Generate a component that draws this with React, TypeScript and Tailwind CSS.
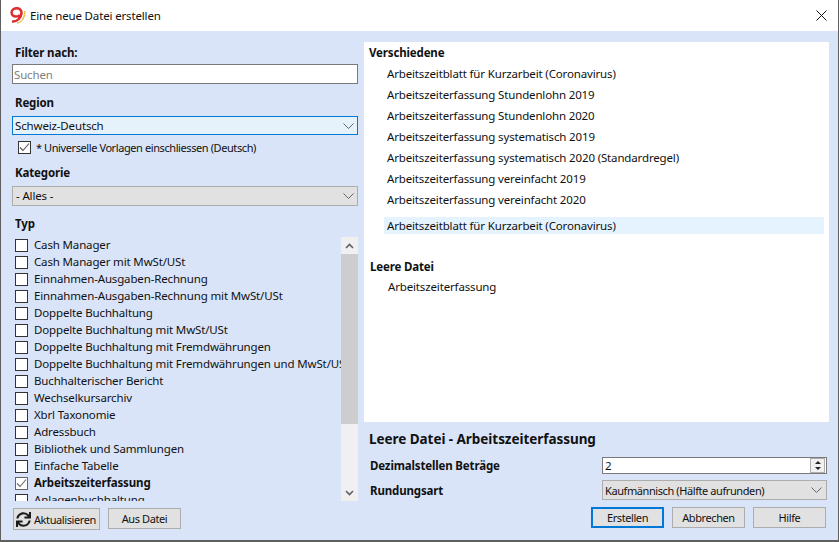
import React from "react";
import { FaSync } from "react-icons/fa";

const types = [
  "Cash Manager",
  "Cash Manager mit MwSt/USt",
  "Einnahmen-Ausgaben-Rechnung",
  "Einnahmen-Ausgaben-Rechnung mit MwSt/USt",
  "Doppelte Buchhaltung",
  "Doppelte Buchhaltung mit MwSt/USt",
  "Doppelte Buchhaltung mit Fremdwährungen",
  "Doppelte Buchhaltung mit Fremdwährungen und MwSt/USt",
  "Buchhalterischer Bericht",
  "Wechselkursarchiv",
  "Xbrl Taxonomie",
  "Adressbuch",
  "Bibliothek und Sammlungen",
  "Einfache Tabelle",
];

const templates = [
  "Arbeitszeitblatt für Kurzarbeit (Coronavirus)",
  "Arbeitszeiterfassung Stundenlohn 2019",
  "Arbeitszeiterfassung Stundenlohn 2020",
  "Arbeitszeiterfassung systematisch 2019",
  "Arbeitszeiterfassung systematisch 2020 (Standardregel)",
  "Arbeitszeiterfassung vereinfacht 2019",
  "Arbeitszeiterfassung vereinfacht 2020",
];

const Chevron = () => (
  <svg width="11" height="6" viewBox="0 0 11 6" fill="none" stroke="#666" strokeWidth="1">
    <path d="M0.5 0.5 L5.5 5.5 L10.5 0.5" />
  </svg>
);

const Check = ({ color }: { color: string }) => (
  <svg width="11" height="11" viewBox="0 0 11 11" fill="none" stroke={color} strokeWidth="1.1">
    <path d="M1 5.5 L4 8.5 L10 1.5" />
  </svg>
);

const Box = ({ checked, muted }: { checked?: boolean; muted?: boolean }) => (
  <span
    className={`flex h-[13px] w-[13px] shrink-0 items-center justify-center border bg-white ${
      muted ? "border-[#666]" : "border-[#333]"
    }`}
  >
    {checked && <Check color={muted ? "#666" : "#555"} />}
  </span>
);

const Btn = ({ label, width, primary }: { label: string; width: string; primary?: boolean }) => (
  <button
    className={`flex h-[21px] items-center justify-center bg-[#e1e1e1] text-[11px] tracking-[-0.41px] ${width} ${
      primary ? "border-2 border-[#0078d7]" : "border border-[#adadad]"
    }`}
  >
    {label}
  </button>
);

const Logo = () => (
  <svg width="17" height="17" viewBox="0 0 17 17" fill="none">
    <path d="M8 16 C12 15.5 15.5 11 15.5 5 L16 4 C16.5 10 13 16 8 16 Z" fill="#e6c34a" stroke="#e6c34a" />
    <path
      d="M3 14.5 C8 15 12 11 12.5 6.5 C12.8 3 10.5 1.2 7.8 1.2 C5 1.2 2.6 3 2.6 5.6 C2.6 8 4.6 9.6 7 9.6 C8.6 9.6 9.9 9 10.8 8"
      stroke="#df2b2b"
      strokeWidth="2.5"
    />
  </svg>
);

export default function App() {
  return (
    <div className="flex h-[542px] w-[839px] flex-col overflow-hidden border-x border-b-2 border-x-[#5f5f5f] border-b-[#5f5f5f] bg-[#d9e4f8] font-['Noto_Sans',sans-serif] text-[11.5px] leading-none tracking-[-0.15px] text-[#111]">
      {/* title bar */}
      <div className="flex h-[31px] shrink-0 items-center bg-white pl-[8px] pr-[11px]">
        <Logo />
        <span className="ml-[4px] flex-1 text-[#111]">Eine neue Datei erstellen</span>
        <svg width="11" height="11" viewBox="0 0 11 11" stroke="#111" strokeWidth="1">
          <path d="M0.5 0.5 L10.5 10.5 M10.5 0.5 L0.5 10.5" />
        </svg>
      </div>

      <div className="flex min-h-0 flex-1 pl-[11px] pr-[9px] pt-[11px]">
        {/* left column */}
        <div className="flex w-[346px] shrink-0 flex-col">
          <div className="flex h-[21px] items-center pl-[3px] font-bold">Filter nach:</div>
          <div className="mt-[1px] flex h-[20px] items-center border border-[#7a7a7a] bg-white pl-[1px] pt-[2px] text-[#808080]">Suchen</div>
          <div className="mt-[8px] flex h-[22px] items-center pl-[3px] font-bold">Region</div>
          <div className="mt-[2px] flex h-[19px] items-center justify-between border border-[#0078d7] bg-[#e5f1fb] pl-[2px] pr-[3px]">
            <span>Schweiz-Deutsch</span>
            <Chevron />
          </div>
          <div className="mt-[6px] flex h-[13px] items-center gap-[5px] pl-[6px]">
            <Box checked />
            <span className="text-[11px] tracking-[-0.41px]">* Universelle Vorlagen einschliessen (Deutsch)</span>
          </div>
          <div className="mt-[8px] flex h-[22px] items-center pl-[3px] font-bold">Kategorie</div>
          <div className="mt-[2px] flex h-[20px] items-center justify-between border border-[#adadad] bg-[#e1e1e1] pl-[3px] pr-[3px]">
            <span>- Alles -</span>
            <Chevron />
          </div>
          <div className="mt-[7px] flex h-[22px] items-center pl-[3px] font-bold">Typ</div>
          <div className="mt-[2px] flex h-[264px] overflow-hidden">
            <div className="min-w-0 flex-1 overflow-hidden pl-[3px]">
              {types.map((t) => (
                <div key={t} className="flex h-[17px] items-center gap-[6px] whitespace-nowrap">
                  <Box />
                  <span className="-mt-[1px]">{t}</span>
                </div>
              ))}
              <div className="flex h-[17px] items-center gap-[6px] whitespace-nowrap font-bold">
                <Box checked muted />
                <span className="-mt-[1px]">Arbeitszeiterfassung</span>
              </div>
              <div className="flex h-[17px] items-center gap-[6px] whitespace-nowrap">
                <Box />
                <span className="-mt-[1px]">Anlagenbuchhaltung</span>
              </div>
            </div>
            {/* scrollbar */}
            <div className="flex w-[17px] shrink-0 flex-col bg-[#f0f0f0]">
              <div className="flex h-[17px] items-center justify-center">
                <svg width="9" height="6" viewBox="0 0 9 6" fill="none" stroke="#606060" strokeWidth="1.6">
                  <path d="M1 5 L4.5 1.5 L8 5" />
                </svg>
              </div>
              <div className="h-[170px] bg-[#cdcdcd]" />
              <div className="flex-1" />
              <div className="flex h-[17px] items-center justify-center">
                <svg width="9" height="6" viewBox="0 0 9 6" fill="none" stroke="#606060" strokeWidth="1.6">
                  <path d="M1 1 L4.5 4.5 L8 1" />
                </svg>
              </div>
            </div>
          </div>
          <div className="mt-[7px] flex gap-[8px] pl-[1px]">
            <button className="flex h-[22px] w-[87px] items-center gap-[3px] border border-[#adadad] bg-[#e1e1e1] pl-[2px] text-[11px] tracking-[-0.41px]">
              <FaSync size={15} color="#1a1a1a" />
              <span>Aktualisieren</span>
            </button>
            <Btn label="Aus Datei" width="w-[73px]" />
          </div>
        </div>

        {/* right column */}
        <div className="ml-[6px] flex min-w-0 flex-1 flex-col">
          <div className="h-[380px] bg-white pl-[5px] pr-[5px] pt-[3px]">
            <div className="flex h-[16px] items-center font-bold">Verschiedene</div>
            <div className="mt-[2px] pl-[18px]">
              {templates.map((t) => (
                <div key={t} className="flex h-[21px] items-center">
                  {t}
                </div>
              ))}
            </div>
            <div className="mt-[7px] ml-[15px] flex h-[17px] items-center bg-[#e5f3ff] pl-[3px]">{templates[0]}</div>
            <div className="mt-[25px] flex h-[16px] items-center pl-[1px] font-bold">Leere Datei</div>
            <div className="mt-[1px] flex h-[21px] items-center pl-[19px]">Arbeitszeiterfassung</div>
          </div>
          <div className="mt-[9px] flex h-[18px] items-center pl-[5px] text-[13.5px] font-bold tracking-[-0.05px]">Leere Datei - Arbeitszeiterfassung</div>
          <div className="mt-[8px] flex h-[17px] items-center justify-between pl-[6px] pr-[2px]">
            <span className="font-bold">Dezimalstellen Beträge</span>
            <div className="flex h-[17px] w-[225px] items-center justify-between border border-[#7a7a7a] bg-white pl-[2px] pr-[1px]">
              <span>2</span>
              <div className="flex h-[15px] w-[15px] flex-col items-center justify-center gap-[3px] border border-[#adadad] bg-[#f0f0f0]">
                <span className="h-0 w-0 border-x-[3px] border-b-[3px] border-x-transparent border-b-[#222]" />
                <span className="h-0 w-0 border-x-[3px] border-t-[3px] border-x-transparent border-t-[#222]" />
              </div>
            </div>
          </div>
          <div className="mt-[6px] flex h-[20px] items-center justify-between pl-[6px] pr-[2px]">
            <span className="pt-[2px] font-bold">Rundungsart</span>
            <div className="flex h-[20px] w-[225px] items-center justify-between border border-[#adadad] bg-[#e1e1e1] pl-[2px] pr-[4px]">
              <span className="text-[11px] tracking-[-0.41px]">Kaufmännisch (Hälfte aufrunden)</span>
              <Chevron />
            </div>
          </div>
          <div className="mt-[7px] flex justify-end gap-[8px] pr-[3px]">
            <Btn label="Erstellen" width="w-[73px]" primary />
            <Btn label="Abbrechen" width="w-[73px]" />
            <Btn label="Hilfe" width="w-[73px]" />
          </div>
        </div>
      </div>
    </div>
  );
}
